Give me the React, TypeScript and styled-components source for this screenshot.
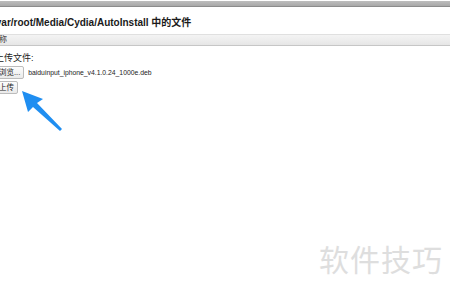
import React from "react";
import styled, { createGlobalStyle } from "styled-components";

const Global = createGlobalStyle`
  html, body { margin: 0; padding: 0; background: #fff; overflow: hidden; }
  body { width: 450px; height: 292px; font-family: "Liberation Sans", "Noto Sans CJK SC", sans-serif; color: #111; }
`;

const Page = styled.div`
  position: relative;
  width: 450px;
  height: 292px;
  overflow: hidden;
  background: #fff;
`;

const TopBar = styled.div`
  height: 5px;
  margin-top: 1px;
  background: linear-gradient(#bdbdbd, #a8a8a8);
  border-bottom: 1px solid #8c8c8c;
`;

const Content = styled.div`
  display: flex;
  flex-direction: column;
  margin-left: -7px;
`;

const Title = styled.h1`
  margin: 10px 0 0 0;
  font-size: 10px;
  font-weight: bold;
  line-height: 12px;
  color: #1a1a1a;
  white-space: nowrap;
`;

const TableHeader = styled.div`
  margin-top: 5px;
  margin-left: -2px;
  margin-right: -10px;
  height: 10px;
  background: linear-gradient(#f4f4f4, #e6e6e6);
  border-top: 1px solid #e0e0e0;
  border-bottom: 1px solid #c6c6c6;
  font-size: 8px;
  line-height: 10px;
  color: #333;
  white-space: nowrap;
`;

const Label = styled.div`
  margin-top: 6px;
  margin-left: 2px;
  font-size: 9px;
  line-height: 12px;
  color: #222;
`;

const Row = styled.div`
  display: flex;
  align-items: center;
  gap: 4px;
  margin-top: 2px;
`;

const Btn = styled.button`
  font-family: "Liberation Sans", "Noto Sans CJK SC", sans-serif;
  font-size: 7.5px;
  line-height: 10px;
  height: 13px;
  padding: 0 3px 0 5px;
  border: 1px solid #bcbcbc;
  border-radius: 2px;
  background: linear-gradient(#fdfdfd, #eaeaea);
  color: #222;
  display: flex;
  align-items: center;
`;

const FileName = styled.span`
  font-size: 6.8px;
  color: #222;
  white-space: nowrap;
`;

const Arrow = styled.svg`
  position: absolute;
  left: 0;
  top: 0;
`;

const Watermark = styled.div`
  position: absolute;
  left: 319px;
  top: 236px;
  font-family: "Noto Sans CJK SC", sans-serif;
  font-size: 30px;
  letter-spacing: 1px;
  color: #dedede;
`;

export default function App() {
  return (
    <Page>
      <Global />
      <TopBar />
      <Content>
        <Title>/var/root/Media/Cydia/AutoInstall 中的文件</Title>
        <TableHeader>名称</TableHeader>
        <Label>上传文件:</Label>
        <Row>
          <Btn>浏览...</Btn>
          <FileName>baiduinput_iphone_v4.1.0.24_1000e.deb</FileName>
        </Row>
        <Row>
          <Btn>上传</Btn>
        </Row>
      </Content>
      <Arrow width="80" height="140" viewBox="0 0 80 140">
        <path d="M22 91 L43 99 L37 103 L62 129 L60 131 L33 107 L28 112 Z" fill="#1f8ef1" />
      </Arrow>
      <Watermark>软件技巧</Watermark>
    </Page>
  );
}
